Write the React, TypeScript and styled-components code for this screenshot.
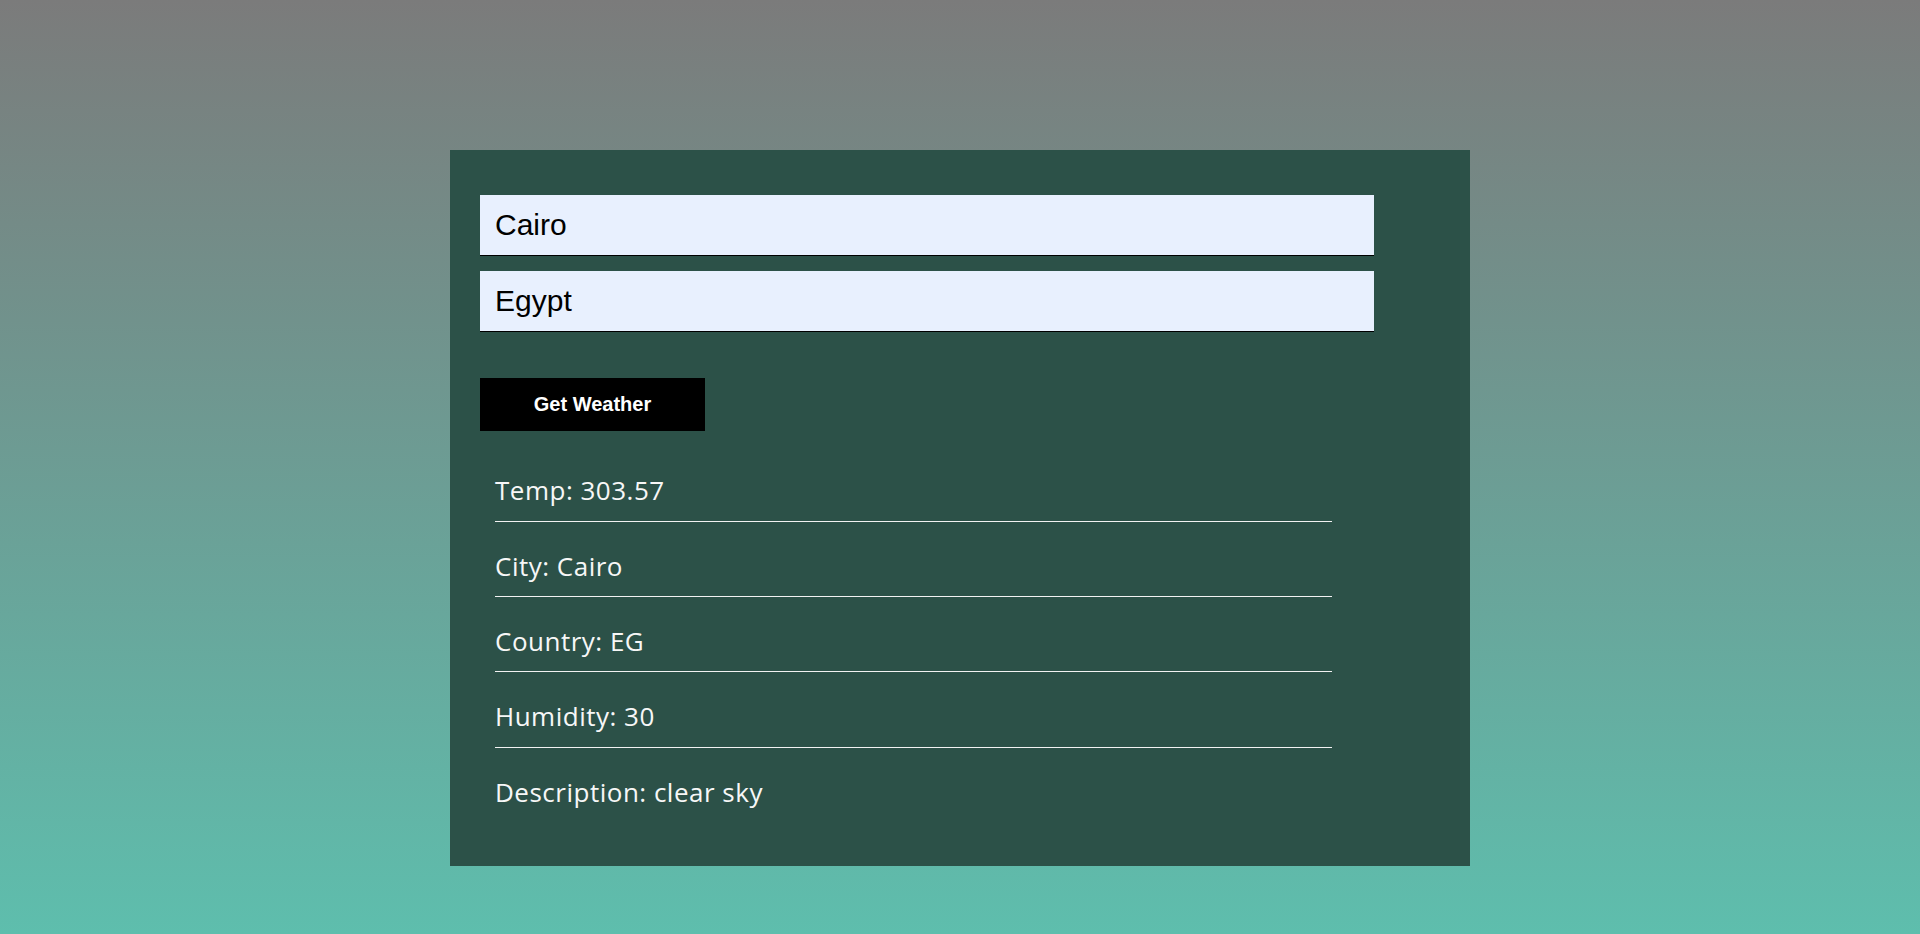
import React from "react";
import styled, { createGlobalStyle } from "styled-components";

const GlobalStyle = createGlobalStyle`
  html, body {
    margin: 0;
    padding: 0;
    height: 100%;
  }
  body {
    background: linear-gradient(to bottom, #7b7b7b 0%, #5ebead 100%);
    background-attachment: fixed;
    font-family: "Liberation Sans", Arial, sans-serif;
  }
`;

const Page = styled.div`
  min-height: 100vh;
  box-sizing: border-box;
  padding-top: 150px;
  display: flex;
  flex-direction: column;
  align-items: center;
`;

const Panel = styled.div`
  width: 1020px;
  box-sizing: border-box;
  background: #2c5148;
  padding: 45px 96px 44px 30px;
  display: flex;
  flex-direction: column;
`;

const Form = styled.form`
  display: flex;
  flex-direction: column;
  align-items: flex-start;
`;

const Field = styled.input`
  width: 894px;
  height: 61px;
  box-sizing: border-box;
  margin: 0 0 ${(p) => (p.$last ? "46px" : "15px")};
  padding: 0 15px;
  border: none;
  border-bottom: 1px solid #000;
  outline: none;
  background: #e8f0fe;
  color: #000;
  font-family: "Liberation Sans", Arial, sans-serif;
  font-size: 30px;
`;

const Button = styled.button`
  width: 225px;
  height: 53px;
  border: none;
  background: #000;
  color: #fff;
  font-family: "Liberation Sans", Arial, sans-serif;
  font-weight: 700;
  font-size: 20px;
  cursor: pointer;
  padding: 0;
`;

const List = styled.ul`
  list-style: none;
  margin: 15.4px 0 0 15px;
  padding: 0;
  width: 837px;
`;

const Row = styled.li`
  padding: 27px 0 12px;
  line-height: 35.33px;
  font-family: "Open Sans", "Noto Sans", sans-serif;
  font-size: 26px;
  letter-spacing: 0.5px;
  color: #f7f7f7;
  border-bottom: ${(p) => (p.$last ? "none" : "1px solid #f2f2f2")};
`;

const rows = [
  "Temp: 303.57",
  "City: Cairo",
  "Country: EG",
  "Humidity: 30",
  "Description: clear sky",
];

export default function App() {
  return (
    <>
      <GlobalStyle />
      <Page>
        <Panel>
          <Form onSubmit={(e) => e.preventDefault()}>
            <Field type="text" defaultValue="Cairo" />
            <Field type="text" defaultValue="Egypt" $last />
            <Button type="submit">Get Weather</Button>
          </Form>
          <List>
            {rows.map((r, i) => (
              <Row key={r} $last={i === rows.length - 1}>
                {r}
              </Row>
            ))}
          </List>
        </Panel>
      </Page>
    </>
  );
}
